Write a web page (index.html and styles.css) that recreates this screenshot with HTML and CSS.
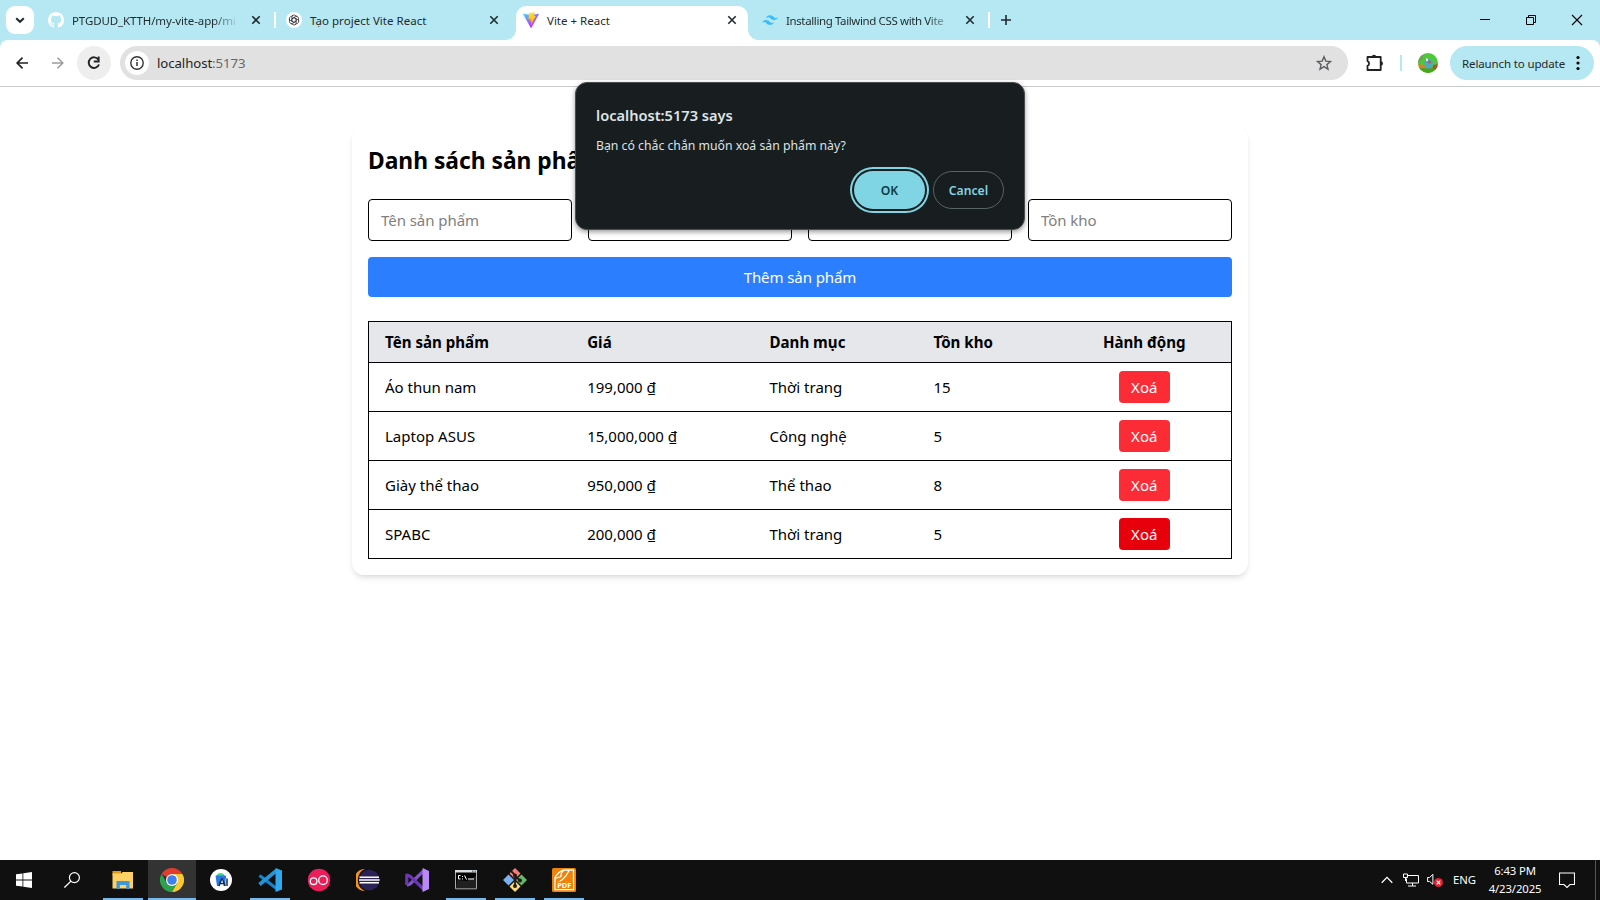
FILE: index.html
```html
<!DOCTYPE html>
<html lang="vi">
<head>
<meta charset="utf-8">
<title>Vite + React</title>
<link rel="stylesheet" href="styles.css">
</head>
<body>
<div class="screen">
  <div class="chrome">
  <header class="tabstrip">
    <button class="tab-search" aria-label="Search tabs"><svg width="28" height="28" viewBox="0 0 28 28"><path d="M10.200 12.200l3.800 3.600 3.800-3.600" fill="none" stroke="#1f2a2d" stroke-width="2"/></svg></button>
    <div class="tab tab-github">
      <svg class="favicon" viewBox="0 0 16 16"><path fill="#fff" d="M8 0C3.58 0 0 3.58 0 8c0 3.54 2.29 6.53 5.47 7.59.4.07.55-.17.55-.38 0-.19-.01-.82-.01-1.49-2.01.37-2.53-.49-2.69-.94-.09-.23-.48-.94-.82-1.13-.28-.15-.68-.52-.01-.53.63-.01 1.08.58 1.23.82.72 1.21 1.87.87 2.33.66.07-.52.28-.87.51-1.07-1.78-.2-3.64-.89-3.64-3.95 0-.87.31-1.59.82-2.15-.08-.2-.36-1.02.08-2.12 0 0 .67-.21 2.2.82.64-.18 1.32-.27 2-.27s1.36.09 2 .27c1.53-1.04 2.2-.82 2.2-.82.44 1.1.16 1.92.08 2.12.51.56.82 1.27.82 2.15 0 3.07-1.87 3.75-3.65 3.95.29.25.54.73.54 1.48 0 1.07-.01 1.93-.01 2.2 0 .21.15.46.55.38A8.01 8.01 0 0 0 16 8c0-4.42-3.58-8-8-8z"/></svg>
      <span class="tab-title fade">PTGDUD_KTTH/my-vite-app/mi</span>
      <svg class="tab-close" viewBox="0 0 10 10"><path d="M1.300 1.300l7.400 7.400M8.700 1.300l-7.400 7.400"/></svg>
    </div>
    <i class="tab-sep"></i>
    <div class="tab tab-gpt">
      <svg class="favicon" viewBox="0 0 16 16"><circle cx="8" cy="8" r="8" fill="#fff"/><g fill="none" stroke="#333" stroke-width=".9" transform="translate(.8 .8) scale(.9)"><path id="petal" d="M5.600 6.600V4.700a2.300 2.300 0 0 1 3.500-1.900l2.700 1.600M5.600 6.600v2.700L8 10.700"/><use href="#petal" transform="rotate(60 8 8)"/><use href="#petal" transform="rotate(120 8 8)"/><use href="#petal" transform="rotate(180 8 8)"/><use href="#petal" transform="rotate(240 8 8)"/><use href="#petal" transform="rotate(300 8 8)"/></g></svg>
      <span class="tab-title">Tạo project Vite React</span>
      <svg class="tab-close" viewBox="0 0 10 10"><path d="M1.300 1.300l7.400 7.400M8.700 1.300l-7.400 7.400"/></svg>
    </div>
    <div class="tab tab-active">
      <svg class="favicon" viewBox="0 0 256 257"><defs><linearGradient id="va" x1="0" x2=".57" y1=".08" y2=".8"><stop offset="0" stop-color="#41d1ff"/><stop offset="1" stop-color="#bd34fe"/></linearGradient><linearGradient id="vb" x1=".43" x2=".5" y1=".02" y2=".9"><stop offset="0" stop-color="#ffea83"/><stop offset=".08" stop-color="#ffdd35"/><stop offset="1" stop-color="#ffa800"/></linearGradient></defs><path fill="url(#va)" d="M255.150 37.940L134.900 252.980c-2.480 4.440-8.860 4.460-11.380.05L.870 37.960c-2.750-4.810 1.370-10.630 6.820-9.660l120.390 21.520c.77.140 1.550.14 2.320 0l117.870-21.480c5.440-1 9.570 4.800 6.880 9.600z"/><path fill="url(#vb)" d="M185.430.060L96.440 17.500a3.270 3.270 0 0 0-2.630 3.010l-5.480 92.460a3.270 3.270 0 0 0 4 3.380l24.780-5.720a3.270 3.270 0 0 1 3.930 3.840l-7.360 36.050a3.270 3.270 0 0 0 4.150 3.780l15.300-4.650a3.270 3.270 0 0 1 4.150 3.790l-11.700 56.620c-.73 3.540 3.980 5.470 5.940 2.430l1.320-2.020 72.520-144.720a3.270 3.270 0 0 0-3.540-4.680l-25.500 4.920a3.270 3.270 0 0 1-3.760-4.120l16.640-57.700A3.270 3.270 0 0 0 185.430.060z"/></svg>
      <span class="tab-title">Vite + React</span>
      <svg class="tab-close" viewBox="0 0 10 10"><path d="M1.300 1.300l7.400 7.400M8.700 1.300l-7.400 7.400"/></svg>
    </div>
    <div class="tab tab-tw">
      <svg class="favicon" viewBox="0 0 54 54"><path fill="#38bdf8" d="M27 11q-10.800 0-13.500 10.800 4.050-5.400 9.450-4.050c2.050.51 3.520 2 5.140 3.650C30.740 24.090 33.810 27.200 40.500 27.200q10.800 0 13.500-10.800-4.050 5.400-9.450 4.050c-2.050-.51-3.520-2-5.140-3.650C36.760 14.110 33.690 11 27 11zM13.500 27.200Q2.700 27.200 0 38q4.050-5.400 9.450-4.050c2.050.51 3.520 2 5.140 3.650 2.650 2.690 5.720 5.800 12.410 5.800q10.800 0 13.500-10.800-4.050 5.400-9.450 4.050c-2.050-.51-3.520-2-5.140-3.650-2.650-2.690-5.720-5.800-12.410-5.800z"/></svg>
      <span class="tab-title fade">Installing Tailwind CSS with Vite</span>
      <svg class="tab-close" viewBox="0 0 10 10"><path d="M1.300 1.300l7.400 7.400M8.700 1.300l-7.400 7.400"/></svg>
    </div>
    <i class="tab-sep"></i>
    <svg class="newtab" viewBox="0 0 10 10"><path d="M5 0v10M0 5h10" stroke="#1f2a2d" stroke-width="1.600"/></svg>
    <div class="winbtns">
      <svg viewBox="0 0 46 40"><path d="M18 19.500h10" stroke="#000"/></svg>
      <svg viewBox="0 0 46 40"><path d="M18.500 17.500h7v7h-7zM20.500 17.500v-2h7v7h-2" fill="none" stroke="#000"/></svg>
      <svg viewBox="0 0 46 40"><path d="M18 15l10 10M28 15l-10 10" stroke="#000" stroke-width="1.100"/></svg>
    </div>
  </header>

  <div class="toolbar">
    <svg class="tbtn" viewBox="0 0 36 34"><path d="M28 17H17.500M22.500 11.700L17.200 17l5.300 5.300" fill="none" stroke="#1f2325" stroke-width="1.700"/></svg>
    <svg class="tbtn" viewBox="0 0 36 34"><path d="M16 17h10.500M21.500 11.700l5.300 5.300-5.300 5.300" fill="none" stroke="#9a9c9d" stroke-width="1.500"/></svg>
    <svg class="reload" viewBox="0 0 34 34"><path d="M21.400 13.600A5.300 5.300 0 1 0 22 18.500" fill="none" stroke="#1f2325" stroke-width="1.900"/><path d="M22.600 10.600v5.800h-5.800v-1.800h4V10.600z" fill="#1f2325"/></svg>
    <div class="omnibox">
      <svg class="info" viewBox="0 0 24 24"><circle cx="12" cy="12" r="12" fill="#fff"/><circle cx="12" cy="12" r="6.200" fill="none" stroke="#333" stroke-width="1.400"/><path d="M12 11v4M12 8.400v1.500" stroke="#333" stroke-width="1.500"/></svg>
      <span class="url">localhost<span class="port">:5173</span></span>
      <svg class="star" viewBox="0 0 16 16"><path d="M8 1.700l1.800 4.400 4.700.4-3.600 3.100 1.100 4.600L8 11.700l-4 2.500 1.100-4.600L1.500 6.500l4.700-.4z" fill="none" stroke="#5b5f61" stroke-width="1.400"/></svg>
    </div>
    <svg class="puzzle" viewBox="0 0 18 18"><path d="M1.500 3h13.200v13H1.500v-4.100a2.600 2.600 0 0 0 0-4.800z" fill="none" stroke="#1f2325" stroke-width="1.800" stroke-linejoin="round"/><path d="M5.800 3a2.200 2.300 0 0 1 4.400 0zM14.800 7.300a2.200 2.200 0 0 1 0 4.400z" fill="#1f2325"/></svg>
    <i class="bar-sep"></i>
    <svg class="avatar" viewBox="0 0 20 20"><defs><clipPath id="av"><circle cx="10" cy="10" r="10"/></clipPath></defs><g clip-path="url(#av)"><path fill="#4fc63c" d="M0 0h20v20H0z"/><path fill="#63a84a" d="M0 4l5-3v5l-5 4z"/><path fill="#6f9350" d="M0 14h20v3H0z"/><path fill="#47a811" d="M0 15.600h20V20H0z"/><path fill="#e67a28" d="M0 11l6 1 2 3H1z"/><path fill="#a2582c" d="M15 12l5-1v5h-5z"/><path fill="#4ba9c4" d="M6 8.500l4-3 5 3-1 6.500-6 .5z"/><path fill="#eee" d="M8 5l2 1v2H8z"/><circle cx="11.500" cy="9" r="1.300" fill="#e34234"/></g></svg>
    <div class="relaunch"><span>Relaunch to update</span><svg viewBox="0 0 4 16"><circle cx="2" cy="2.500" r="1.600"/><circle cx="2" cy="8" r="1.600"/><circle cx="2" cy="13.500" r="1.600"/></svg></div>
  </div>
  </div>

  <main class="page">
    <section class="card">
      <h1>Danh sách sản phẩm</h1>
      <form class="fields">
        <input placeholder="Tên sản phẩm"><input placeholder="Giá"><input placeholder="Danh mục"><input placeholder="Tồn kho">
      </form>
      <button class="add">Thêm sản phẩm</button>
      <table>
        <colgroup><col class="c1"><col class="c2"><col class="c3"><col class="c4"><col class="c5"></colgroup>
        <thead><tr><th>Tên sản phẩm</th><th>Giá</th><th>Danh mục</th><th>Tồn kho</th><th class="mid">Hành động</th></tr></thead>
        <tbody>
          <tr><td>Áo thun nam</td><td>199,000 ₫</td><td>Thời trang</td><td>15</td><td class="mid"><button class="del">Xoá</button></td></tr>
          <tr><td>Laptop ASUS</td><td>15,000,000 ₫</td><td>Công nghệ</td><td>5</td><td class="mid"><button class="del">Xoá</button></td></tr>
          <tr><td>Giày thể thao</td><td>950,000 ₫</td><td>Thể thao</td><td>8</td><td class="mid"><button class="del">Xoá</button></td></tr>
          <tr><td>SPABC</td><td>200,000 ₫</td><td>Thời trang</td><td>5</td><td class="mid"><button class="del hover">Xoá</button></td></tr>
        </tbody>
      </table>
    </section>
  </main>

  <div class="dialog">
    <h2>localhost:5173 says</h2>
    <p>Bạn có chắc chắn muốn xoá sản phẩm này?</p>
    <div class="actions"><button class="ok">OK</button><button class="cancel">Cancel</button></div>
  </div>

  <footer class="taskbar">
    <div class="start"><svg width="16" height="16" viewBox="0 0 16 16"><path fill="#fff" d="M0 2.300l6.500-.9v6.200H0zM7.300 1.300L16 0v7.600H7.300zM0 8.400h6.500v6.200L0 13.700zM7.300 8.400H16V16l-8.700-1.300z"/></svg></div>
    <div class="start"><svg width="16" height="16" viewBox="0 0 16 16"><circle cx="10.400" cy="5.600" r="5" fill="none" stroke="#fff" stroke-width="1.200"/><path d="M6.900 9.100L.4 15.600" stroke="#fff" stroke-width="1.300"/></svg></div>
    <div class="app run"><svg viewBox="0 0 24 24"><path fill="#e09c12" d="M1.500 3H10v4H1.500z"/><path fill="#fdd164" d="M1.500 5.500h8.700L11.800 4H22v16.500H1.500z"/><path fill="#3d97d8" d="M5.500 13h13v8h-3.300v-4H8.800v4H5.500z"/></svg></div>
    <div class="app run current"><svg viewBox="0 0 24 24"><path fill="#e33b2e" d="M12 12L1.600 6A12 12 0 0 1 22.400 6z"/><path fill="#2da14c" d="M1.600 6A12 12 0 0 0 12 24l5.200-9L12 12 6.800 15z"/><path fill="#fcc934" d="M22.400 6A12 12 0 0 1 12 24l5.200-9L12 6z"/><circle cx="12" cy="12" r="6" fill="#fff"/><circle cx="12" cy="12" r="4.800" fill="#3f7fee"/></svg></div>
    <div class="app"><svg viewBox="0 0 24 24"><circle cx="12" cy="12" r="11" fill="#fff"/><path fill="#3ddc84" d="M7.500 8.500a4 3.600 0 0 1 8 0z"/><path fill="#2878e8" d="M6.500 7.500h10v10.500h-2V9.500h-1L10.500 18H8z"/><path fill="#2878e8" d="M7 8h10v3H7z"/><path d="M10 18l2.600-7h1L16 18M11 15.500h4M18 10.500V18" stroke="#123055" stroke-width="1.500" fill="none"/></svg></div>
    <div class="app run"><svg viewBox="0 0 24 24"><path fill="none" stroke="#1684cc" stroke-width="3.200" d="M1.500 7.500L18.500 20.500"/><path fill="none" stroke="#2295dc" stroke-width="3.600" d="M1.500 16.500L18.500 2.500"/><path fill="#2fa8ef" d="M17.500 0L24 2.500v19L17.500 24z"/></svg></div>
    <div class="app"><svg viewBox="0 0 24 24"><circle cx="12" cy="12" r="11.200" fill="#e91e5a"/><circle cx="6.600" cy="13.200" r="3.300" fill="none" stroke="#fff" stroke-width="1.300"/><circle cx="16" cy="12.200" r="4.300" fill="none" stroke="#fff" stroke-width="1.300"/></svg></div>
    <div class="app"><svg viewBox="0 0 24 24"><path fill="#f7941e" d="M9 1a11 11 0 0 0 0 22 12 12 0 0 1 0-22z"/><circle cx="13.300" cy="12" r="10.300" fill="#2c2255"/><path d="M3.500 9.200H23M3 12h20.600M3.500 14.800H23" stroke="#fff" stroke-width="1.600"/></svg></div>
    <div class="app"><svg viewBox="0 0 24 24"><path fill="none" stroke="#8450cc" stroke-width="3.200" stroke-linejoin="round" d="M18.500 3L5 16l-3.200 1.200"/><path fill="none" stroke="#6a38b0" stroke-width="3.200" stroke-linejoin="round" d="M1.800 17V7L5 8.200 18.500 21"/><path fill="#b98af5" d="M17.500 0L24 3v18l-6.500 3z"/></svg></div>
    <div class="app run"><svg viewBox="0 0 24 24"><path fill="#000" stroke="#aaa" d="M1.500 2.500h21v18.300h-21z"/><path fill="#ddd" d="M1 2h22v2.500H1z"/><path fill="#5c7fae" d="M18 2.500h1.400v1.400H18zM20.500 2.500h1.400v1.400h-1.400z"/><path fill="#202020" d="M3 12l10 1 9-5v12H2z"/><path d="M6.500 7.500h-2v3.500h2M8.500 8v1M8.500 10.500v1M10.500 7.500l2 4M14 11h6" stroke="#fff" fill="none"/></svg></div>
    <div class="app run"><svg viewBox="0 0 24 24"><path fill="#f37f7c" d="M12 0l5.500 5.500L12 11 6.500 5.500z"/><path fill="#7ab2f2" d="M5.500 6.500L11 12l-5.500 5.500L0 12z"/><path fill="#68b969" d="M18.500 6.500L24 12l-5.500 5.500L13 12z"/><path fill="#fadc72" d="M12 13l5.500 5.500L12 24l-5.500-5.500z"/><path d="M8 3l4 4v11M12 8l5 4.500" stroke="#241a14" stroke-width="1.800" fill="none"/><circle cx="12" cy="18" r="2" fill="#241a14"/><circle cx="17" cy="12.500" r="2" fill="#241a14"/><circle cx="12" cy="7.500" r="2" fill="#241a14"/></svg></div>
    <div class="app run"><svg viewBox="0 0 24 24"><rect width="24" height="24" rx="1.500" fill="#f08307"/><path d="M3 21.500V9.500Q7 3 12 2h9.500v19.500zM3 10.500l6-2Q8.500 5 12 2M4 15Q12 13 17 2.500" fill="none" stroke="#fff" stroke-width="1.300"/><path fill="#f08307" d="M3.700 13.500h17.200v7.400H3.700z"/><text class="pdf" x="12.300" y="20.200" text-anchor="middle">PDF</text></svg></div>
    <div class="tray">
      <svg class="chev" viewBox="0 0 12 8"><path d="M.7 6.700L6 1.400l5.300 5.300" fill="none" stroke="#fff" stroke-width="1.300"/></svg>
      <svg class="net" viewBox="0 0 16 14"><path d="M4.500 2.500h11v7.500H3.500V5.500M9.500 10v3M5 13h8M.5 1h4v3.500h-4zM2.500 4.500V8" fill="none" stroke="#fff"/></svg>
      <svg class="vol" viewBox="0 0 16 14"><path d="M.6 4.500h2l3.300-3.200v10L2.600 8.500h-2z" fill="none" stroke="#fff"/><circle cx="11.500" cy="9.500" r="4.500" fill="#db2430"/><path d="M9.700 7.700l3.600 3.600M13.300 7.700l-3.600 3.600" stroke="#fff" stroke-width="1.100"/></svg>
      <span class="lang">ENG</span>
      <div class="clock"><span>6:43 PM</span><span>4/23/2025</span></div>
      <svg class="note" viewBox="0 0 16 16"><path d="M.5 1h15v11.500h-4.500L8 15.500l-3-3H.5z" fill="none" stroke="#fff" stroke-width="1.100"/></svg>
      <i class="peek"></i>
    </div>
  </footer>
</div>
</body>
</html>
```
FILE: styles.css
```css
* { box-sizing: border-box; }
body { margin: 0; font-family: "Noto Sans", "Open Sans", sans-serif; color: #000; background: #fff; }
button, input { font: inherit; margin: 0; border: 0; padding: 0; }
svg { display: block; flex: none; }
i { display: block; flex: none; }
.screen { position: relative; width: 1600px; height: 900px; display: flex; flex-direction: column; overflow: hidden; }
.chrome { background: #b5e8f2; flex: none; }

/* Tab strip */
.tabstrip { height: 40px; display: flex; align-items: center; padding-left: 6px; }
.tab-search { width: 28px; height: 28px; border-radius: 9px; background: #fff; flex: none; }
.tab { height: 28px; display: flex; align-items: center; flex: none; }
.favicon { width: 16px; height: 16px; margin-right: 8px; }
.tab-title { flex: 1; min-width: 0; font-size: 11.5px; line-height: 16px; white-space: nowrap; color: #1f2a2d; padding-top: 1px; }
.fade { -webkit-mask-image: linear-gradient(90deg, #000 calc(100% - 26px), transparent); mask-image: linear-gradient(90deg, #000 calc(100% - 26px), transparent); }
.tab-close { width: 10px; height: 10px; margin-left: 12px; stroke: #1f2a2d; stroke-width: 1.6; }
.tab-github { margin-left: 14px; width: 213px; }
.tab-github .tab-title { letter-spacing: -.12px; }
.tab-sep { width: 2px; height: 16px; background: #fff; margin: 0 0 0 13px; }
.tab-gpt { margin-left: 10px; width: 213px; margin-right: 17px; }
.tab-gpt .tab-title { letter-spacing: .03px; }
.tab-active { position: relative; width: 224px; height: 34px; align-self: flex-end; background: #fff; border-radius: 10px 10px 0 0; padding: 0 11px 6px 7px; }
.tab-active::before, .tab-active::after { content: ""; position: absolute; bottom: 0; width: 10px; height: 10px; }
.tab-active::before { left: -10px; background: radial-gradient(circle at 0 0, transparent 9.500px, #fff 10px); }
.tab-active::after { right: -10px; background: radial-gradient(circle at 100% 0, transparent 9.500px, #fff 10px); }
.tab-active { width: 232px; flex: none; }
.tab-tw { margin-left: 14px; width: 213px; }
.tab-tw .tab-title { letter-spacing: -.38px; }
.newtab { width: 10px; height: 10px; margin-left: 11px; }
.winbtns { margin-left: auto; display: flex; }
.winbtns svg { width: 46px; height: 40px; }

/* Toolbar */
.toolbar { height: 47px; background: #fff; border-bottom: 1px solid #c8cacb; display: flex; align-items: center; border-radius: 8px 8px 0 0; }
.tbtn { width: 36px; height: 34px; }
.tbtn + .tbtn { margin-right: 5px; }
.reload { width: 34px; height: 34px; border-radius: 50%; background: #eee; margin-right: 9px; }
.omnibox { width: 1228px; height: 34px; border-radius: 17px; background: #e1e1e1; display: flex; align-items: center; padding: 0 16px 0 5px; }
.info { width: 24px; height: 24px; }
.url { flex: 1; margin-left: 8px; font-size: 13.200px; letter-spacing: -.07px; color: #1f2325; }
.port { color: #666a6b; }
.star { width: 16px; height: 16px; }
.puzzle { width: 18px; height: 18px; margin-left: 18px; }
.bar-sep { width: 2px; height: 16px; background: #b5e8f2; margin: 0 16px; }
.avatar { width: 20px; height: 20px; }
.relaunch { width: 144px; height: 34px; border-radius: 17px; background: #b5e8f2; margin-left: 12px; display: flex; align-items: center; padding: 0 14px 0 12px; font-size: 11.500px; letter-spacing: -.13px; color: #1f2a2d; justify-content: space-between; white-space: nowrap; }
.relaunch svg { width: 4px; height: 16px; }

/* Product page */
.page { flex: 1; padding-top: 40px; }
.card { width: 896px; height: 448px; margin: 0 auto; padding: 16px; border-radius: 12px; box-shadow: 0 4px 6px -1px rgba(0,0,0,.1), 0 2px 4px -2px rgba(0,0,0,.1); font-size: 15px; }
.card h1 { margin: 0 0 22px; padding-top: 2px; font-size: 22.800px; line-height: 32px; font-weight: 700; white-space: nowrap; }
.fields { display: grid; grid-template-columns: repeat(4, 1fr); gap: 16px; margin-bottom: 16px; }
.fields input { width: 100%; height: 42px; border: 1px solid #000; border-radius: 4px; padding: 0 12px; background: #fff; letter-spacing: -.05px; }
.fields input::placeholder { color: #808080; opacity: 1; }
.add { display: block; width: 100%; height: 40px; border-radius: 4px; background: #2b7fff; color: #fff; margin-bottom: 24px; letter-spacing: -.08px; }
table { width: 864px; border-collapse: collapse; table-layout: fixed; border: 1px solid #000; }
.c1 { width: 202.700px; } .c2 { width: 182.300px; } .c3 { width: 164px; } .c4 { width: 140px; } .c5 { width: 174px; }
tr { border-top: 1px solid #000; height: 49px; }
thead tr { height: 41px; background: #e5e7eb; }
th, td { padding: 0 16px; text-align: left; line-height: 24px; white-space: nowrap; }
th { font-weight: 700; font-size: 15.100px; }
.mid { text-align: center; }
.del { display: block; margin: 0 auto; width: 51px; height: 32px; border-radius: 4px; background: #fb2c36; color: #fff; }
.del.hover { background: #e7000b; }

/* Confirm dialog above the page */
.dialog { position: absolute; left: 575px; top: 82px; width: 450px; height: 148px; background: #181d1f; border: 1px solid #4a4d4f; border-radius: 12px; box-shadow: 0 2px 5px rgba(0,0,0,.4); padding: 19px 20px 20px; color: #dfe3e4; }
.dialog h2 { margin: 0; font-size: 14.600px; line-height: 26px; font-weight: 600; }
.dialog p { margin: 7px 0 0; font-size: 12.250px; line-height: 22px; white-space: nowrap; }
.actions { display: flex; justify-content: flex-end; gap: 8px; margin-top: 14px; font-size: 12.200px; }
.actions button { width: 71px; height: 38px; border-radius: 19px; font-weight: 600; }
.ok { background: #80d5e4; color: #0c3c46; box-shadow: 0 0 0 2px #181d1f, 0 0 0 4px #80d5e4; }
.actions .cancel { background: transparent; color: #80d5e4; border: 1px solid #566466; }

/* Taskbar */
.taskbar { height: 40px; flex: none; background: #101010; display: flex; color: #fff; }
.start { width: 48px; display: grid; place-items: center; }
.start + .start { margin-right: 3px; }
.app { width: 48px; margin-right: 1px; display: flex; justify-content: center; padding-top: 8px; }
.app svg { width: 24px; height: 24px; }
.run { background: linear-gradient(#76b9ed, #76b9ed) center bottom / 40px 2px no-repeat; }
.current { background-color: #333; background-size: 48px 2px; }
.pdf { font: 700 7.500px "Noto Sans", sans-serif; fill: #fff; }
.tray { margin-left: auto; display: flex; align-items: center; font-size: 11.300px; }
.chev { width: 12px; height: 8px; }
.net { width: 16px; height: 14px; margin-left: 10px; }
.vol { width: 16px; height: 14px; margin-left: 8px; }
.lang { width: 24px; margin-left: 10px; letter-spacing: -.1px; margin-top: -2px; }
.clock { width: 60px; margin-left: 8px; display: flex; flex-direction: column; align-items: center; line-height: 18px; letter-spacing: -.1px; }
.note { width: 16px; height: 16px; margin-left: 14px; }
.peek { width: 1px; height: 40px; background: #555; margin: 0 4px 0 20px; }
```
